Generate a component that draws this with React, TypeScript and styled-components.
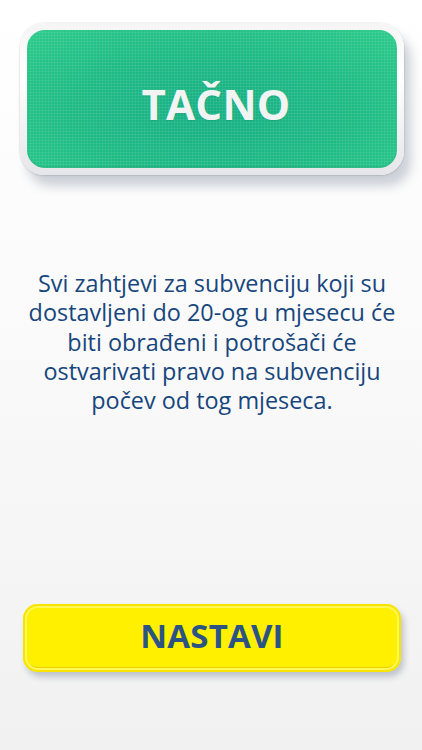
import React from "react";
import styled, { createGlobalStyle } from "styled-components";

const GlobalStyle = createGlobalStyle`
    html, body {
        margin: 0;
        padding: 0;
    }
    body {
        font-family: "Open Sans", "Noto Sans", sans-serif;
    }
`;

const message =
    "Svi zahtjevi za subvenciju koji su dostavljeni do 20-og u mjesecu će biti obrađeni i potrošači će ostvarivati pravo na subvenciju počev od tog mjeseca.";

export default function App() {
    return (
        <StyledPage>
            <GlobalStyle />

            <StyledResultFrame>
                <StyledResultPanel>
                    <StyledResultTitle>TAČNO</StyledResultTitle>
                </StyledResultPanel>
            </StyledResultFrame>

            <StyledMessage>{message}</StyledMessage>

            <StyledNextButton type={"button"}>NASTAVI</StyledNextButton>
        </StyledPage>
    );
}

const StyledPage = styled.main`
    min-height: 750px;
    box-sizing: border-box;
    display: flex;
    flex-direction: column;
    align-items: center;
    padding: 23px 18px 78px 20px;
    background: linear-gradient(180deg, #ffffff 0%, #fafafa 45%, #f1f1f1 100%);
`;

const StyledResultFrame = styled.div`
    width: 100%;
    box-sizing: border-box;
    padding: 7px;
    border-radius: 24px;
    background: linear-gradient(180deg, #f5f5f6 0%, #ffffff 35%, #e6e6ea 100%);
    box-shadow:
        0 0 0 1px rgba(0, 0, 0, 0.04),
        0 1px 2px rgba(0, 0, 0, 0.08),
        7px 11px 11px rgba(90, 105, 130, 0.3);
`;

const StyledResultPanel = styled.div`
    height: 138px;
    box-sizing: border-box;
    padding: 8px 0 0 8px;
    display: flex;
    align-items: center;
    justify-content: center;
    border-radius: 18px;
    background:
        repeating-linear-gradient(90deg, rgba(255, 255, 255, 0.07) 0 1px, transparent 1px 3px),
        repeating-linear-gradient(0deg, rgba(255, 255, 255, 0.07) 0 1px, transparent 1px 3px),
        radial-gradient(ellipse at 50% 60%, #17b083 0%, #1fbb85 55%, #2dcb8b 100%);
    box-shadow: inset 0 -2px 2px rgba(0, 0, 0, 0.06);
`;

const StyledResultTitle = styled.h1`
    margin: 0;
    font-family: "Open Sans", "Noto Sans", sans-serif;
    font-weight: 700;
    font-size: 42px;
    letter-spacing: 0.3px;
    color: #f2f4f3;
    text-shadow: 0 1px 1px rgba(0, 0, 0, 0.08);
`;

const StyledMessage = styled.p`
    margin: 94px 0 0;
    padding: 0 6px;
    text-align: center;
    font-family: "Open Sans", "Noto Sans", sans-serif;
    font-size: 23.4px;
    line-height: 29.3px;
    color: #17467d;
`;

const StyledNextButton = styled.button`
    margin-top: auto;
    width: 378px;
    height: 68px;
    box-sizing: border-box;
    border: none;
    border-radius: 15px;
    background: #fff000;
    box-shadow:
        inset 0 0 0 2px #f7e400,
        inset 0 0 0 4px #fff65a,
        inset 0 -5px 0 #e9d400,
        3px 5px 6px rgba(70, 85, 110, 0.3);
    font-family: "Open Sans", "Noto Sans", sans-serif;
    font-weight: 700;
    font-size: 33px;
    letter-spacing: 0.2px;
    color: #2b5485;
    padding: 0 0 5px;
    cursor: pointer;
`;
